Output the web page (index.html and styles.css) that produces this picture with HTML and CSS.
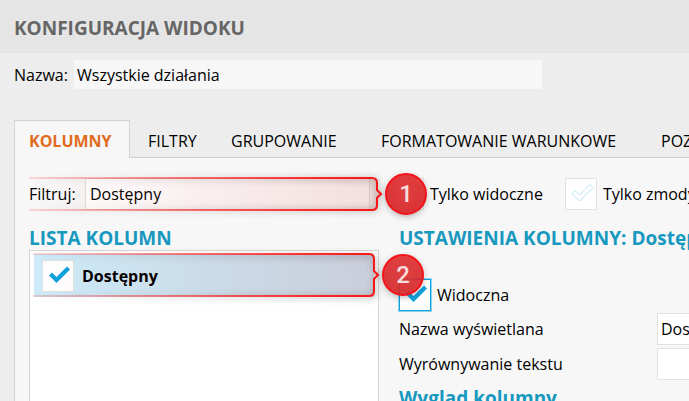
FILE: index.html
```html
<!DOCTYPE html>
<html lang="pl">
	<head>
		<meta charset="UTF-8">
		<title>Konfiguracja widoku</title>
		<link rel="stylesheet" href="styles.css">
	</head>
	<body>
		<header class="top">
			<h1>KONFIGURACJA WIDOKU</h1>
		</header>
		<div class="name">
			<label for="name">Nazwa:</label>
			<input type="text" id="name" value="Wszystkie działania">
		</div>
		<nav class="tabs">
			<button type="button" class="tab active">KOLUMNY</button>
			<button type="button" class="tab">FILTRY</button>
			<button type="button" class="tab">GRUPOWANIE</button>
			<button type="button" class="tab">FORMATOWANIE WARUNKOWE</button>
			<button type="button" class="tab">POZOSTAŁE</button>
		</nav>
		<main class="panel">
			<div class="filter">
				<div class="search">
					<label for="filter">Filtruj:</label>
					<input type="text" id="filter" value="Dostępny">
				</div>
				<label class="check">
					<span class="box">
						<input type="checkbox">
						<svg class="off" viewBox="0 0 32 32"><path d="M7 15.500l3-3 4.500 4.500 10.500-10.500 3 3-13.500 13.500z"/></svg>
					</span>
					Tylko widoczne
				</label>
				<label class="check">
					<span class="box">
						<input type="checkbox">
						<svg class="off" viewBox="0 0 32 32"><path d="M7 15.500l3-3 4.500 4.500 10.500-10.500 3 3-13.500 13.500z"/></svg>
					</span>
					Tylko zmodyfikowane
				</label>
				<!-- 1 -->
				<svg class="mark" width="400" height="64" viewBox="0 0 400 64">
					<defs>
						<linearGradient id="line" gradientUnits="userSpaceOnUse" x1="0" y1="0" x2="350" y2="0">
							<stop offset="0" stop-color="#ff1a1a" stop-opacity=".15"/>
							<stop offset=".8" stop-color="#ff1a1a" stop-opacity=".9"/>
							<stop offset="1" stop-color="#f91414"/>
						</linearGradient>
						<linearGradient id="tint" gradientUnits="userSpaceOnUse" x1="0" y1="0" x2="350" y2="0">
							<stop offset="0" stop-color="#b42424" stop-opacity="0"/>
							<stop offset="1" stop-color="#b42424" stop-opacity=".15"/>
						</linearGradient>
						<linearGradient id="gray" gradientUnits="userSpaceOnUse" x1="0" y1="0" x2="350" y2="0">
							<stop offset="0" stop-color="#555" stop-opacity="0"/>
							<stop offset="1" stop-color="#555" stop-opacity=".4"/>
						</linearGradient>
						<filter id="soft" x="-20%" y="-50%" width="140%" height="200%"><feGaussianBlur stdDeviation="3"/></filter>
						<radialGradient id="red" cx=".5" cy=".4" r=".6">
							<stop offset="0" stop-color="#e63434"/>
							<stop offset="1" stop-color="#de2528"/>
						</radialGradient>
					</defs>
					<path d="M0 17H343Q348 17 348 21V28L352 32L348 36V43Q348 48 343 48H0" fill="none" stroke="url(#gray)" stroke-width="4" filter="url(#soft)"/>
					<path d="M0 16H343Q348 16 348 21V28L352 32L348 36V43Q348 48 343 48H0" fill="url(#tint)" stroke="url(#line)" stroke-width="2"/>
					<circle cx="377" cy="34" r="20" fill="#333" fill-opacity=".4" filter="url(#soft)"/>
					<circle cx="377" cy="32" r="20" fill="url(#red)" fill-opacity=".9" stroke="#f51319" stroke-width="2"/>
					<text x="377" y="40">1</text>
				</svg>
			</div>
			<div class="columns">
				<section class="left">
					<h2>LISTA KOLUMN</h2>
					<div class="list">
						<label class="item">
							<span class="box">
								<input type="checkbox" checked>
								<svg class="on" viewBox="0 0 32 32"><path d="M7 15.500l3-3 4.500 4.500 10.500-10.500 3 3-13.500 13.500z"/></svg>
							</span>
							Dostępny
						</label>
						<!-- 2 -->
						<svg class="mark" width="396" height="64" viewBox="0 0 396 64">
							<path d="M4 13H341Q346 13 346 17V27L350 32L346 37V50Q346 54 341 54H4" fill="none" stroke="url(#gray)" stroke-width="4" filter="url(#soft)"/>
							<path d="M4 11H340Q345 11 345 16V28L349 32L345 36V48Q345 53 340 53H4" fill="url(#tint)" stroke="url(#line)" stroke-width="2"/>
							<circle cx="374" cy="34" r="20" fill="#333" fill-opacity=".4" filter="url(#soft)"/>
							<circle cx="374" cy="32" r="20" fill="url(#red)" fill-opacity=".88" stroke="#f51319" stroke-width="2"/>
							<text x="374" y="40">2</text>
						</svg>
					</div>
				</section>
				<section class="right">
					<h2>USTAWIENIA KOLUMNY: Dostępny</h2>
					<label class="check visible">
						<span class="box focus">
							<input type="checkbox" checked>
							<svg class="on" viewBox="0 0 32 32"><path d="M7 15.500l3-3 4.500 4.500 10.500-10.500 3 3-13.500 13.500z"/></svg>
						</span>
						Widoczna
					</label>
					<div class="row">
						<label for="shown">Nazwa wyświetlana</label>
						<input type="text" id="shown" value="Dostępny">
					</div>
					<div class="row">
						<label for="align">Wyrównywanie tekstu</label>
						<select id="align"><option></option></select>
					</div>
					<h2>Wygląd kolumny</h2>
				</section>
			</div>
		</main>
	</body>
</html>
```
FILE: styles.css
```css
*{
	box-sizing: border-box;
}
html,body{
	height: 100%;
}
body{
	margin: 0;
	display: flex;
	flex-direction: column;
	overflow: hidden;
	background: #ededed;
	color: #000;
	font: 16px/22px "Open Sans", "Noto Sans", sans-serif;
}
input,select,button{
	font: inherit;
	color: inherit;
	margin: 0;
	border: none;
	border-radius: 0;
	outline: none;
}
h1,h2{
	margin: 0;
	font-weight: bold;
	white-space: nowrap;
}
h1{
	font-size: 19px;
	line-height: 25px;
	color: #666;
}
h2{
	font-size: 19px;
	line-height: 24px;
	color: #1799bf;
}
.top{
	padding: 16px 14px 12px;
	background: #e5e5e5;
}
.name{
	display: flex;
	align-items: center;
	gap: 7px;
	padding: 7px 14px 31px;
}
.name label{
	width: 53px;
}
.name input{
	width: 468px;
	height: 29px;
	padding: 0 3px;
	background: #f7f7f7;
}
.tabs{
	display: grid;
	grid-template-columns: 116px 83px 150px 280px auto;
	height: 38px;
	flex: none;
	overflow: hidden;
	margin-left: 14px;
	box-shadow: inset 0 -1px #d2d2d2;
}
.tab{
	padding: 4px 0 0 18px;
	background: none;
	text-align: left;
	white-space: nowrap;
}
.tab.active{
	padding: 2px 0 0 14px;
	border: 1px solid #d2d2d2;
	border-bottom: none;
	background: #f7f7f7;
	color: #e06c1c;
	font-weight: bold;
}
.panel{
	flex: 1;
	display: flex;
	flex-direction: column;
	overflow: hidden;
	margin-left: 14px;
	padding: 20px 0 0 14px;
	border-left: 1px solid #d2d2d2;
	background: #f7f7f7;
}
.filter{
	position: relative;
	display: flex;
	gap: 22px;
	height: 32px;
	margin-bottom: 16px;
	white-space: nowrap;
}
.search{
	display: flex;
	align-items: center;
	width: 341px;
	flex: none;
}
.search label{
	width: 56px;
}
.search input{
	flex: 1;
	min-width: 0;
	height: 32px;
	padding: 0 4px;
	border: 1px solid #e2e2e2;
	background: #fff;
}
.check{
	display: flex;
	align-items: center;
	gap: 6px;
	white-space: nowrap;
}
.box{
	display: grid;
	width: 32px;
	height: 32px;
	flex: none;
}
.box input{
	grid-area: 1/1;
	width: 100%;
	height: 100%;
	appearance: none;
	border: 1px solid #e2e2e2;
	background: #fff;
}
.box svg{
	grid-area: 1/1;
	width: 100%;
	height: 100%;
	pointer-events: none;
}
.off{
	fill: none;
	stroke: #b5e4f5;
}
.on{
	fill: #0da3de;
}
.focus input{
	border: 1px solid #0da3de;
	box-shadow: 0 0 0 1px #8fd3f0;
}
.columns{
	flex: 1;
	display: flex;
	gap: 20px;
}
.left{
	display: flex;
	flex-direction: column;
	width: 350px;
	flex: none;
}
.list{
	position: relative;
	flex: 1;
	padding: 3px 4px;
	border: 1px solid #d6d6d6;
	border-bottom: none;
	background: #fff;
}
.item{
	display: flex;
	align-items: center;
	gap: 8px;
	height: 43px;
	padding-left: 8px;
	background: #cdebf9;
	font-weight: bold;
}
/* numbered callouts over the form */
.mark{
	position: absolute;
	z-index: 1;
	left: 0;
	top: -16px;
	pointer-events: none;
	overflow: visible;
}
.list .mark{
	left: -1px;
	top: -8px;
}
.mark text{
	font: 500 24px Roboto, sans-serif;
	fill: #f6dede;
	text-anchor: middle;
}
.visible{
	margin-top: 29px;
}
.right{
	flex: 1;
	min-width: 0;
}
.row{
	display: grid;
	grid-template-columns: 258px 180px;
	align-items: center;
	height: 35px;
}
.row input,.row select{
	height: 32px;
	padding: 0 3px;
	border: 1px solid #e2e2e2;
	background: #fff;
	appearance: none;
}
.row + h2{
	margin-top: 5px;
}
```
